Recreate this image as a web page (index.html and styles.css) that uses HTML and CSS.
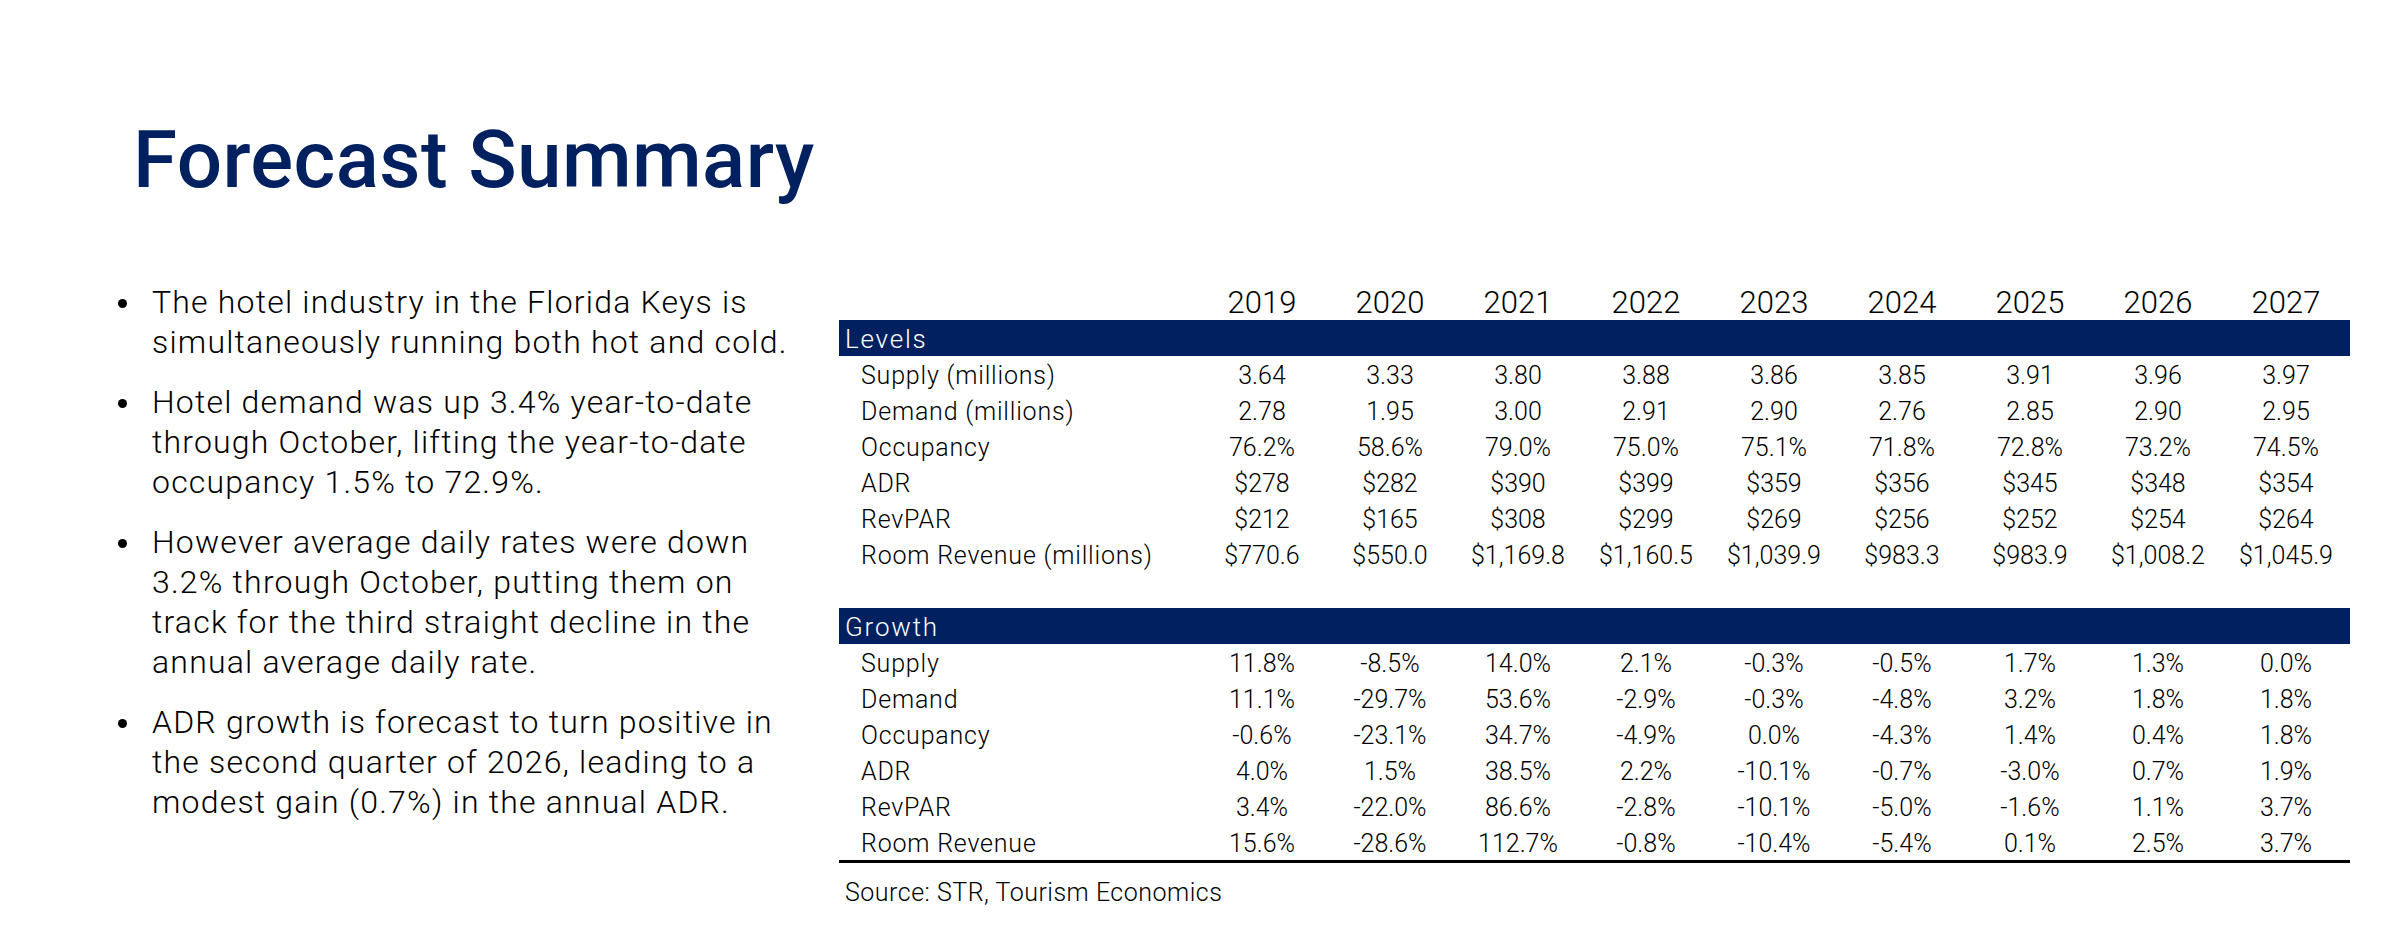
FILE: index.html
```html
<!DOCTYPE html>
<html lang="en">
<head>
<meta charset="utf-8">
<title>Forecast Summary</title>
<link rel="stylesheet" href="styles.css">
</head>
<body>
<div class="slide">
  <h1 class="title">Forecast Summary</h1>
  <div class="content">
    <ul class="bullets">
      <li><span class="dot"></span><span class="btext">The hotel industry in the Florida Keys is<br>simultaneously running both hot and cold.</span></li>
      <li><span class="dot"></span><span class="btext">Hotel demand was up 3.4% year-to-date<br>through October, lifting the year-to-date<br>occupancy 1.5% to 72.9%.</span></li>
      <li><span class="dot"></span><span class="btext">However average daily rates were down<br>3.2% through October, putting them on<br>track for the third straight decline in the<br>annual average daily rate.</span></li>
      <li><span class="dot"></span><span class="btext">ADR growth is forecast to turn positive in<br>the second quarter of 2026, leading to a<br>modest gain (0.7%) in the annual ADR.</span></li>
    </ul>
    <div class="tablebox">
      <table class="data">
        <colgroup>
          <col class="c-label">
          <col class="c-year"><col class="c-year"><col class="c-year"><col class="c-year"><col class="c-year"><col class="c-year"><col class="c-year"><col class="c-year"><col class="c-year">
        </colgroup>
        <tr class="years">
          <td></td><td>2019</td><td>2020</td><td>2021</td><td>2022</td><td>2023</td><td>2024</td><td>2025</td><td>2026</td><td>2027</td>
        </tr>
        <tr class="band"><td colspan="10">Levels</td></tr>
        <tr><td class="lbl">Supply (millions)</td><td>3.64</td><td>3.33</td><td>3.80</td><td>3.88</td><td>3.86</td><td>3.85</td><td>3.91</td><td>3.96</td><td>3.97</td></tr>
        <tr><td class="lbl">Demand (millions)</td><td>2.78</td><td>1.95</td><td>3.00</td><td>2.91</td><td>2.90</td><td>2.76</td><td>2.85</td><td>2.90</td><td>2.95</td></tr>
        <tr><td class="lbl">Occupancy</td><td>76.2%</td><td>58.6%</td><td>79.0%</td><td>75.0%</td><td>75.1%</td><td>71.8%</td><td>72.8%</td><td>73.2%</td><td>74.5%</td></tr>
        <tr><td class="lbl">ADR</td><td>$278</td><td>$282</td><td>$390</td><td>$399</td><td>$359</td><td>$356</td><td>$345</td><td>$348</td><td>$354</td></tr>
        <tr><td class="lbl">RevPAR</td><td>$212</td><td>$165</td><td>$308</td><td>$299</td><td>$269</td><td>$256</td><td>$252</td><td>$254</td><td>$264</td></tr>
        <tr><td class="lbl">Room Revenue (millions)</td><td>$770.6</td><td>$550.0</td><td>$1,169.8</td><td>$1,160.5</td><td>$1,039.9</td><td>$983.3</td><td>$983.9</td><td>$1,008.2</td><td>$1,045.9</td></tr>
        <tr class="spacer"><td colspan="10"></td></tr>
        <tr class="band"><td colspan="10">Growth</td></tr>
        <tr><td class="lbl">Supply</td><td>11.8%</td><td>-8.5%</td><td>14.0%</td><td>2.1%</td><td>-0.3%</td><td>-0.5%</td><td>1.7%</td><td>1.3%</td><td>0.0%</td></tr>
        <tr><td class="lbl">Demand</td><td>11.1%</td><td>-29.7%</td><td>53.6%</td><td>-2.9%</td><td>-0.3%</td><td>-4.8%</td><td>3.2%</td><td>1.8%</td><td>1.8%</td></tr>
        <tr><td class="lbl">Occupancy</td><td>-0.6%</td><td>-23.1%</td><td>34.7%</td><td>-4.9%</td><td>0.0%</td><td>-4.3%</td><td>1.4%</td><td>0.4%</td><td>1.8%</td></tr>
        <tr><td class="lbl">ADR</td><td>4.0%</td><td>1.5%</td><td>38.5%</td><td>2.2%</td><td>-10.1%</td><td>-0.7%</td><td>-3.0%</td><td>0.7%</td><td>1.9%</td></tr>
        <tr><td class="lbl">RevPAR</td><td>3.4%</td><td>-22.0%</td><td>86.6%</td><td>-2.8%</td><td>-10.1%</td><td>-5.0%</td><td>-1.6%</td><td>1.1%</td><td>3.7%</td></tr>
        <tr><td class="lbl">Room Revenue</td><td>15.6%</td><td>-28.6%</td><td>112.7%</td><td>-0.8%</td><td>-10.4%</td><td>-5.4%</td><td>0.1%</td><td>2.5%</td><td>3.7%</td></tr>
      </table>
      <div class="rule"></div>
      <div class="source">Source: STR, Tourism Economics</div>
    </div>
  </div>
</div>
</body>
</html>
```

FILE: styles.css
```css
html, body {
  margin: 0;
  padding: 0;
  background: #ffffff;
}

body {
  font-family: Roboto, "Liberation Sans", sans-serif;
  color: #000000;
}

.slide {
  width: 2394px;
  height: 926px;
  padding-top: 112px;
  box-sizing: border-box;
  overflow: hidden;
}

.title {
  margin: 0 0 0 133px;
  font-size: 80px;
  line-height: 96px;
  font-weight: 500;
  color: #002060;
  letter-spacing: 0.4px;
}

.content {
  display: flex;
  margin-top: 74px;
}

.bullets {
  list-style: none;
  margin: 0;
  padding: 0 0 0 118px;
  width: 839px;
  box-sizing: border-box;
  flex: none;
}

.bullets li {
  display: flex;
  align-items: flex-start;
  margin-bottom: 20px;
}

.dot {
  flex: none;
  width: 9px;
  height: 9px;
  border-radius: 50%;
  background: #000000;
  margin-top: 17px;
  margin-right: 25px;
}

.btext {
  font-size: 32px;
  line-height: 40px;
  font-weight: 300;
  letter-spacing: 1.2px;
  white-space: nowrap;
}

.tablebox {
  flex: none;
  width: 1511px;
  padding-top: 3px;
}

.data {
  width: 1511px;
  table-layout: fixed;
  border-collapse: collapse;
  border-spacing: 0;
}

.c-label { width: 359px; }
.c-year { width: 128px; }

.data td {
  padding: 4px 0 0 0;
  font-size: 25px;
  line-height: 32px;
  font-weight: 300;
  text-align: center;
  white-space: nowrap;
}

.data td.lbl {
  text-align: left;
  padding-left: 22px;
  letter-spacing: 0.8px;
}

.data tr.years td {
  padding: 0;
  font-size: 31px;
  line-height: 35px;
}

.data tr.band td {
  background: #002060;
  color: #ffffff;
  text-align: left;
  padding: 2px 0 0 6px;
  line-height: 34px;
  font-size: 26px;
  letter-spacing: 1.8px;
}

.data tr.spacer td {
  padding: 0;
  height: 36px;
  line-height: 36px;
}

.rule {
  height: 3px;
  background: #000000;
}

.source {
  margin-top: 12px;
  padding-left: 6px;
  font-size: 25px;
  line-height: 36px;
  font-weight: 300;
  letter-spacing: 0.5px;
}
```
